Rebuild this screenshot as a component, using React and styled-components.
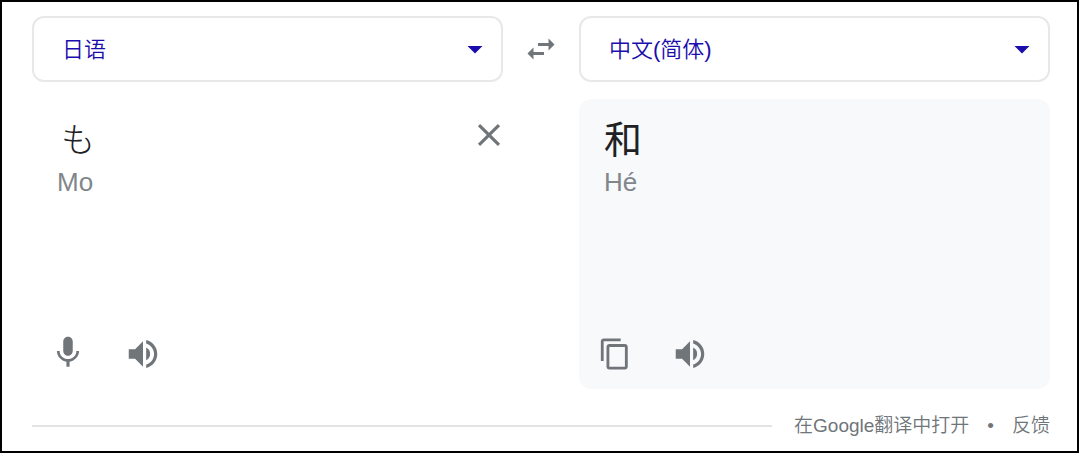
import React from 'react';
import styled, { createGlobalStyle } from 'styled-components';
import {
  MdArrowDropDown,
  MdClose,
  MdContentCopy,
  MdKeyboardVoice,
  MdSwapHoriz,
  MdVolumeUp,
} from 'react-icons/md';

const GlobalStyle = createGlobalStyle`
  * {
    box-sizing: border-box;
  }

  body {
    margin: 0;
    background: #fff;
    font-family: 'Liberation Sans', 'Noto Sans CJK SC', sans-serif;
    color: #202124;
  }
`;

const StyledFrame = styled.main`
  min-height: 100vh;
  padding: 14px 27px 0 30px;
  border: 2px solid #000;
`;

const StyledTranslator = styled.div`
  display: grid;
  grid-template-columns: minmax(0, 1fr) 76px minmax(0, 1fr);
  row-gap: 17px;
`;

const StyledPicker = styled.div`
  display: grid;
  align-items: center;
  height: 66px;
  border: 2px solid #e8e8e8;
  border-radius: 12px;

  > * {
    grid-area: 1 / 1;
  }

  svg {
    justify-self: end;
    margin-right: 8px;
    color: #1a0dab;
    pointer-events: none;
  }
`;

const StyledSelect = styled.select`
  width: 100%;
  height: 100%;
  padding: 0 48px 0 28px;
  border: 0;
  border-radius: 12px;
  appearance: none;
  background: transparent;
  color: #1a0dab;
  font: 350 22px 'Liberation Sans', 'Noto Sans CJK SC', sans-serif;
`;

const IconButton = styled.button`
  display: flex;
  flex: none;
  align-items: center;
  justify-content: center;
  width: ${({ $width }) => $width || 38}px;
  height: ${({ $height }) => $height || 38}px;
  padding: 0;
  border: 0;
  background: none;
  color: #70757a;
  cursor: pointer;

  svg {
    flex: none;
  }
`;

const SwapCell = styled.div`
  display: flex;
  align-items: center;
  justify-content: center;
`;

const StyledPanel = styled.section`
  display: flex;
  flex-direction: column;
  grid-column: ${({ $column }) => $column};
  min-height: 290px;
  padding: 17px 0 16px;
  border-radius: 12px;
  background: ${({ $filled }) => ($filled ? '#f8f9fb' : 'transparent')};
`;

const TextRow = styled.div`
  display: flex;
  align-items: flex-start;
  padding-left: 25px;
`;

const SourceText = styled.textarea`
  flex: 1;
  min-width: 0;
  height: 48px;
  padding: 0 4px;
  border: 0;
  outline: 0;
  resize: none;
  overflow: hidden;
  background: none;
  color: #202124;
  font: 300 34px/48px 'Liberation Sans', 'Noto Sans CJK JP', sans-serif;
`;

const ResultText = styled.div`
  font-size: 38px;
  line-height: 48px;
`;

const Romanized = styled.div`
  padding-left: 25px;
  color: #80868b;
  font-size: 26px;
  line-height: 36px;
`;

const Tools = styled.div`
  display: flex;
  align-items: flex-start;
  gap: 37px;
  margin-top: auto;
  padding-left: 17px;
`;

const StyledFooter = styled.footer`
  display: flex;
  align-items: center;
  gap: 22px;
  padding: 23px 0 11px;
  color: #70757a;
  font-size: 19px;
  line-height: 28px;
`;

const Rule = styled.hr`
  flex: 1;
  height: 2px;
  margin: 0;
  border: 0;
  background: #e3e3e3;
`;

const FooterLinks = styled.div`
  display: flex;
  gap: 18px;
`;

const FooterLink = styled.a`
  color: inherit;
  font-weight: 350;
  text-decoration: none;
`;

function LanguagePicker({ label, value, onChange }) {
  return (
    <StyledPicker>
      <StyledSelect
        aria-label={label}
        value={value}
        onChange={(event) => onChange(event.target.value)}
      >
        <option value="ja">日语</option>
        <option value="zh-CN">中文(简体)</option>
      </StyledSelect>
      <MdArrowDropDown size={36} />
    </StyledPicker>
  );
}

function App() {
  const [from, setFrom] = React.useState('ja');
  const [to, setTo] = React.useState('zh-CN');
  const [text, setText] = React.useState('も');

  const swapLanguages = () => {
    setFrom(to);
    setTo(from);
  };

  return (
    <>
      <GlobalStyle />
      <StyledFrame>
        <StyledTranslator>
          <LanguagePicker label="源语言" value={from} onChange={setFrom} />
          <SwapCell>
            <IconButton aria-label="交换语言" onClick={swapLanguages}>
              <MdSwapHoriz size={36} />
            </IconButton>
          </SwapCell>
          <LanguagePicker label="目标语言" value={to} onChange={setTo} />

          <StyledPanel $column={1}>
            <TextRow>
              <SourceText
                aria-label="原文"
                lang="ja"
                rows={1}
                value={text}
                onChange={(event) => setText(event.target.value)}
              />
              <IconButton $width={28} aria-label="清除" onClick={() => setText('')}>
                <MdClose size={38} />
              </IconButton>
            </TextRow>
            <Romanized>Mo</Romanized>
            <Tools>
              <IconButton $height={32} aria-label="语音输入">
                <MdKeyboardVoice size={38} />
              </IconButton>
              <IconButton aria-label="朗读原文">
                <MdVolumeUp size={38} />
              </IconButton>
            </Tools>
          </StyledPanel>

          <StyledPanel $column={3} $filled>
            <TextRow>
              <ResultText lang="zh-CN">和</ResultText>
            </TextRow>
            <Romanized>Hé</Romanized>
            <Tools>
              <IconButton aria-label="复制">
                <MdContentCopy size={34} />
              </IconButton>
              <IconButton aria-label="朗读译文">
                <MdVolumeUp size={38} />
              </IconButton>
            </Tools>
          </StyledPanel>
        </StyledTranslator>

        <StyledFooter>
          <Rule />
          <FooterLinks>
            <FooterLink href="#translate">在Google翻译中打开</FooterLink>
            <span>•</span>
            <FooterLink href="#feedback">反馈</FooterLink>
          </FooterLinks>
        </StyledFooter>
      </StyledFrame>
    </>
  );
}

export default App;
